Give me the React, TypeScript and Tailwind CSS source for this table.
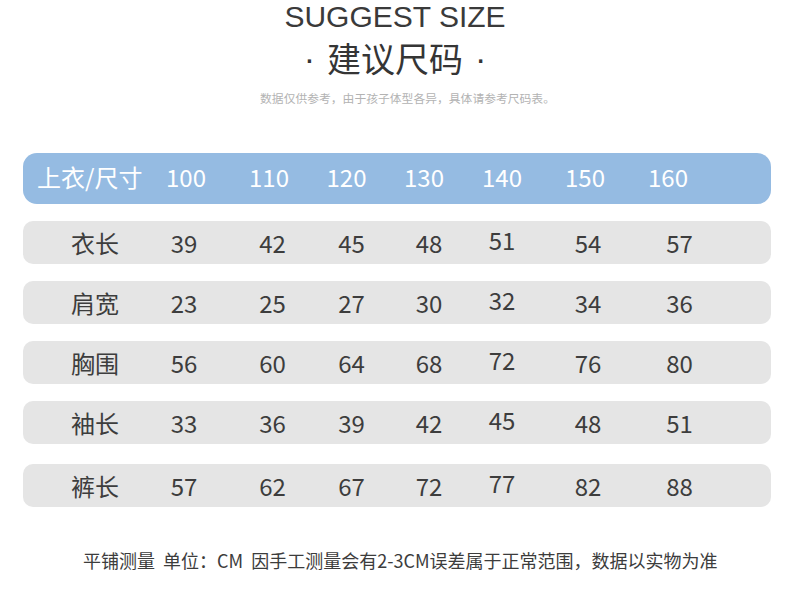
import React from "react";

const cjk = { fontFamily: '"Noto Sans CJK SC", "Noto Sans", sans-serif' };
const latin = { fontFamily: '"Liberation Sans", Arial, sans-serif' };

const sizes = ["100", "110", "120", "130", "140", "150", "160"];

const rows: { label: string; values: string[]; mt: string }[] = [
  { label: "衣长", values: ["39", "42", "45", "48", "51", "54", "57"], mt: "mt-[17px]" },
  { label: "肩宽", values: ["23", "25", "27", "30", "32", "34", "36"], mt: "mt-[17px]" },
  { label: "胸围", values: ["56", "60", "64", "68", "72", "76", "80"], mt: "mt-[17px]" },
  { label: "袖长", values: ["33", "36", "39", "42", "45", "48", "51"], mt: "mt-[17px]" },
  { label: "裤长", values: ["57", "62", "67", "72", "77", "82", "88"], mt: "mt-[20px]" },
];

export default function App() {
  return (
    <div className="w-[790px] h-[604px] bg-white overflow-hidden" style={cjk}>
      <div className="text-center text-[30px] leading-[34px] text-[#3a3a3a]" style={latin}>
        SUGGEST SIZE
      </div>
      <div className="mt-[7px] flex justify-center items-center gap-[12px] text-[34px] leading-[34px] text-[#353535]">
        <span style={latin}>·</span>
        <span>建议尺码</span>
        <span style={latin}>·</span>
      </div>
      <div className="mt-[17px] pl-[25px] text-center text-[11.8px] leading-[11px] text-[#b3b3b3]">
        数据仅供参考，由于孩子体型各异，具体请参考尺码表。
      </div>

      <div className="ml-[23px] mt-[50px] w-[748px] h-[51px] pb-[3px] rounded-[14px] bg-[#95bbe2] grid grid-cols-[122px_82px_84px_71px_84px_72px_94px_72px] items-center text-white text-[24px] leading-[24px]">
        <div className="pl-[14px] whitespace-nowrap">上衣/尺寸</div>
        {sizes.map((s) => (
          <div key={s} className="text-center">
            {s}
          </div>
        ))}
      </div>

      {rows.map((r) => (
        <div
          key={r.label}
          className={`${r.mt} ml-[23px] w-[748px] h-[43px] rounded-[10px] bg-[#e5e5e5] grid grid-cols-[127px_68px_109px_49px_106px_40px_132px_51px] items-center text-[#3d3d3d] text-[24px] leading-[24px]`}
        >
          <div className="pl-[48px] whitespace-nowrap">{r.label}</div>
          {r.values.map((v, i) => (
            <div key={i} className={i === 4 ? "text-center pb-[5px]" : "text-center"}>
              {v}
            </div>
          ))}
        </div>
      ))}

      <div className="mt-[44px] pl-[83px] text-[18px] leading-[18px] text-[#3c3c3c] whitespace-nowrap">
        平铺测量&nbsp;&nbsp;单位：CM&nbsp;&nbsp;因手工测量会有2-3CM误差属于正常范围，数据以实物为准
      </div>
    </div>
  );
}
